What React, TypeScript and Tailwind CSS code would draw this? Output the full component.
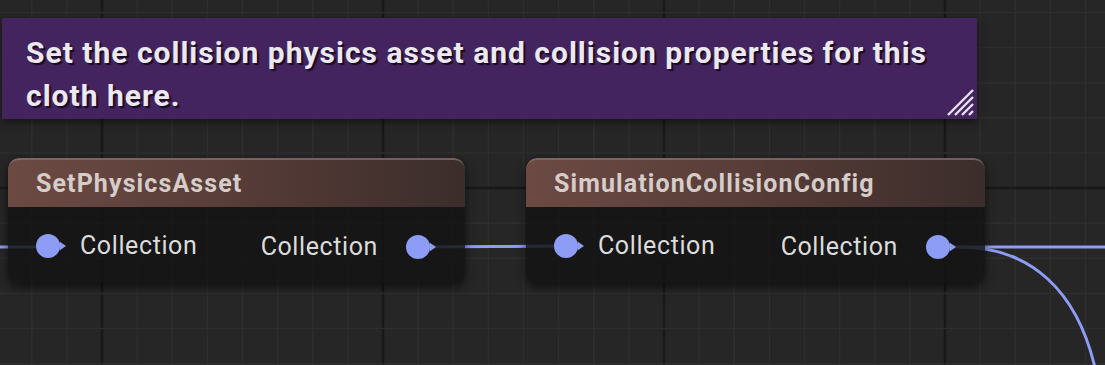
import React from 'react'

const WIRE = '#8d9cf4'
const font = { fontFamily: 'Roboto, "Liberation Sans", sans-serif' }

function Grid() {
  const step = 35.125
  const xs: number[] = []
  const ys: number[] = []
  for (let x = 102 - step * 3; x < 1110; x += step) xs.push(x)
  for (let y = 188 - step * 6; y < 370; y += step) ys.push(y)
  const major = (v: number, origin: number) => Math.abs(((v - origin) / step) % 8) < 0.01
  return (
    <svg className="absolute inset-0" width={1105} height={365}>
      {xs.map((x, i) => (
        <line key={'x' + i} x1={x} y1={0} x2={x} y2={365}
          stroke={major(x, 102) ? '#181818' : '#2e2e2e'} strokeWidth={major(x, 102) ? 2.5 : 1.5} />
      ))}
      {ys.map((y, i) => (
        <line key={'y' + i} x1={0} y1={y} x2={1105} y2={y}
          stroke={major(y, 188) ? '#181818' : '#2e2e2e'} strokeWidth={major(y, 188) ? 2.5 : 1.5} />
      ))}
    </svg>
  )
}

function Wires() {
  return (
    <svg className="absolute inset-0" width={1105} height={365}>
      <g stroke={WIRE} strokeWidth={3} fill="none" strokeLinecap="round">
        <path d="M -5 247 L 48 247" />
        <path d="M 418 247 C 480 247, 505 246, 567 246" />
        <path d="M 937 247 L 1110 247" />
        <path d="M 960 247 C 1030 247, 1078 290, 1096 372" />
      </g>
    </svg>
  )
}

function Pin() {
  return (
    <svg width={34} height={26} viewBox="0 0 34 26" className="shrink-0">
      <circle cx={12} cy={13} r={12} fill={WIRE} />
      <polygon points="23.5,8.5 30,13 23.5,17.5" fill={WIRE} />
    </svg>
  )
}

function Node({ title, left, width }: { title: string; left: number; width: number }) {
  return (
    <div
      className="absolute top-[158px] h-[125px] rounded-[11px] bg-[#141414]/85 shadow-[0_4px_10px_rgba(0,0,0,0.6)] flex flex-col overflow-hidden"
      style={{ left, width, ...font }}
    >
      <div className="h-[49px] shrink-0 rounded-t-[11px] border-t-2 border-[#8a7470]/70 bg-[linear-gradient(to_right,#6c4a43_0%,#5a3e39_45%,#3b2d2b_100%)] flex items-center px-7">
        <span className="text-[25px] font-bold tracking-[1.1px] text-[#d6cdca]">{title}</span>
      </div>
      <div className="flex-1 flex items-center justify-between pl-7 pr-[25px] pt-[4px]">
        <div className="flex items-center gap-[10px] -mt-[2px]">
          <Pin />
          <span className="text-[25px] tracking-[0.6px] text-[#dcdcdc]">Collection</span>
        </div>
        <div className="flex items-center gap-[28px]">
          <span className="text-[25px] tracking-[0.6px] text-[#dcdcdc]">Collection</span>
          <Pin />
        </div>
      </div>
    </div>
  )
}

function ResizeGrip() {
  return (
    <svg width={28} height={28} viewBox="0 0 28 28" className="absolute right-[3px] bottom-[3px]">
      <g stroke="#e6e0ec" strokeWidth={2.4}>
        <line x1={2} y1={27} x2={27} y2={2} />
        <line x1={9} y1={27} x2={27} y2={9} />
        <line x1={16} y1={27} x2={27} y2={16} />
        <line x1={23} y1={27} x2={27} y2={23} />
      </g>
    </svg>
  )
}

export default function App() {
  return (
    <div className="relative w-[1105px] h-[365px] overflow-hidden bg-[#262626]">
      <Grid />
      <Wires />
      <div
        className="absolute left-[2px] top-[18px] w-[975px] h-[101px] bg-[#43245f] shadow-[0_3px_8px_rgba(0,0,0,0.5)] pl-[24px] pt-[13px]"
        style={font}
      >
        <p className="text-[30px] font-bold leading-[43px] tracking-[1px] text-[#ece8f0] [text-shadow:2px_2px_1px_rgba(20,8,30,0.9)]">
          Set the collision physics asset and collision properties for this
          <br />
          cloth here.
        </p>
        <ResizeGrip />
      </div>
      <Node title="SetPhysicsAsset" left={8} width={457} />
      <Node title="SimulationCollisionConfig" left={526} width={459} />
    </div>
  )
}
